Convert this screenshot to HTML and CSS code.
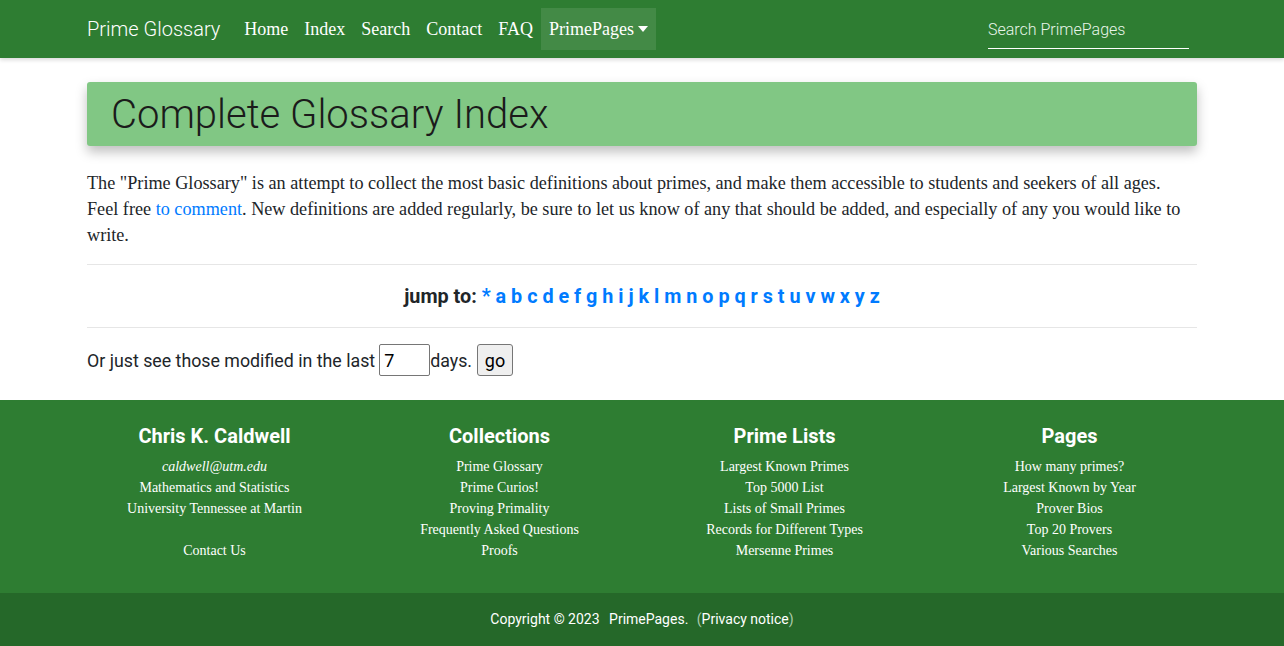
FILE: index.html
```html
<!DOCTYPE html>
<html lang="en">
<head>
  <meta charset="UTF-8">
  <title>Complete Glossary Index</title>
  <link rel="stylesheet" href="styles.css">
</head>
<body>
  <!-- Top navigation -->
  <nav class="navbar">
    <div class="container nav-inner">
      <a class="brand" href="#">Prime Glossary</a>
      <ul class="nav-links">
        <li><a href="#">Home</a></li>
        <li><a href="#">Index</a></li>
        <li><a href="#">Search</a></li>
        <li><a href="#">Contact</a></li>
        <li><a href="#">FAQ</a></li>
        <li class="dropdown"><a href="#">PrimePages<span class="caret"></span></a></li>
      </ul>
      <input class="nav-search" type="text" placeholder="Search PrimePages">
    </div>
  </nav>

  <main class="container main">
    <div class="title-box">
      <h1>Complete Glossary Index</h1>
    </div>

    <p class="intro">The "Prime Glossary" is an attempt to collect the most basic definitions about primes, and make them accessible to students and seekers of all ages. Feel free <a href="#">to comment</a>. New definitions are added regularly, be sure to let us know of any that should be added, and especially of any you would like to write.</p>

    <hr>
    <div class="jump">jump to: <a href="#">*</a> <a href="#">a</a> <a href="#">b</a> <a href="#">c</a> <a href="#">d</a> <a href="#">e</a> <a href="#">f</a> <a href="#">g</a> <a href="#">h</a> <a href="#">i</a> <a href="#">j</a> <a href="#">k</a> <a href="#">l</a> <a href="#">m</a> <a href="#">n</a> <a href="#">o</a> <a href="#">p</a> <a href="#">q</a> <a href="#">r</a> <a href="#">s</a> <a href="#">t</a> <a href="#">u</a> <a href="#">v</a> <a href="#">w</a> <a href="#">x</a> <a href="#">y</a> <a href="#">z</a></div>
    <hr>

    <form class="modified">
      <span>Or just see those modified in the last</span>
      <input type="text" value="7" class="days">
      <span>days.</span>
      <button type="button" class="go">go</button>
    </form>
  </main>

  <!-- Footer -->
  <footer class="footer">
    <div class="container footer-cols">
      <div class="fcol">
        <h4>Chris K. Caldwell</h4>
        <i>caldwell@utm.edu</i><br>
        Mathematics and Statistics<br>
        University Tennessee at Martin<br>
        <br>
        Contact Us
      </div>
      <div class="fcol">
        <h4>Collections</h4>
        Prime Glossary<br>
        Prime Curios!<br>
        Proving Primality<br>
        Frequently Asked Questions<br>
        Proofs
      </div>
      <div class="fcol">
        <h4>Prime Lists</h4>
        Largest Known Primes<br>
        Top 5000 List<br>
        Lists of Small Primes<br>
        Records for Different Types<br>
        Mersenne Primes
      </div>
      <div class="fcol">
        <h4>Pages</h4>
        How many primes?<br>
        Largest Known by Year<br>
        Prover Bios<br>
        Top 20 Provers<br>
        Various Searches
      </div>
    </div>
  </footer>
  <div class="copyright">
    Copyright © 2023 <span class="site">PrimePages.</span> <span class="paren">(</span>Privacy notice<span class="paren">)</span>
  </div>
</body>
</html>
```

FILE: styles.css
```css
body {
  margin: 0;
  font-family: Roboto, "Liberation Sans", sans-serif;
  color: #212529;
  background: #fff;
}
.container {
  width: 1110px;
  margin: 0 auto;
}
a {
  color: #007bff;
  text-decoration: none;
}

/* navbar */
.navbar {
  background: #2e7d32;
  height: 58px;
  box-shadow: 0 2px 4px rgba(0,0,0,0.15);
}
.nav-inner {
  display: flex;
  align-items: center;
  height: 58px;
}
.brand {
  color: #fff;
  font-family: Roboto, sans-serif;
  font-weight: 300;
  font-size: 20px;
  margin-right: 16px;
}
.nav-links {
  display: flex;
  list-style: none;
  margin: 0;
  padding: 0;
}
.nav-links a {
  display: block;
  color: #fff;
  font-family: "Liberation Serif", serif;
  font-size: 18px;
  padding: 10px 8px 9px;
  line-height: 23px;
}
.dropdown a {
  background: rgba(255,255,255,0.1);
}
.caret {
  display: inline-block;
  margin-left: 4px;
  vertical-align: 3px;
  border-top: 6px solid #fff;
  border-left: 5px solid transparent;
  border-right: 5px solid transparent;
}
.nav-search {
  margin-left: auto;
  margin-right: 8px;
  width: 201px;
  background: transparent;
  border: none;
  border-bottom: 1px solid #fff;
  color: #fff;
  font-family: Roboto, sans-serif;
  font-weight: 300;
  font-size: 16px;
  padding: 9px 0 9px;
  margin-top: 2px;
  outline: none;
}
.nav-search::placeholder {
  color: #e8f5e9;
}

/* main */
.main {
  padding-top: 24px;
}
.title-box {
  background: #81c784;
  border-radius: 3px;
  height: 64px;
  padding: 0 24px;
  box-shadow: 0 6px 12px rgba(0,0,0,0.25);
  display: flex;
  align-items: center;
}
h1 {
  margin: 0;
  font-weight: 300;
  font-size: 40px;
  color: #1b1b1b;
}
.intro {
  font-family: "Liberation Serif", serif;
  font-size: 18.2px;
  line-height: 26px;
  margin: 24px 0 16px;
  padding-right: 8px;
}
hr {
  border: none;
  border-top: 1px solid #e6e6e6;
  margin: 0;
}
.jump {
  text-align: center;
  font-weight: 700;
  font-size: 19.8px;
  padding: 18px 0 17px;
  line-height: 27px;
}
.jump a {
  color: #007bff;
}
.modified {
  font-size: 17.8px;
  padding: 16px 0 24px;
  margin: 0;
  display: flex;
  align-items: center;
}
.days {
  box-sizing: border-box;
  width: 51px;
  height: 32px;
  font-size: 18px;
  font-family: Roboto, sans-serif;
  border: 1px solid #767676;
  border-radius: 2px;
  padding: 1px 4px;
  margin: 0 0 0 4px;
}
.go {
  box-sizing: border-box;
  font-family: Roboto, sans-serif;
  font-size: 18px;
  height: 32px;
  width: 36px;
  padding: 0;
  margin-left: 5px;
  background: #efefef;
  border: 1px solid #767676;
  border-radius: 3px;
  color: #000;
}

/* footer */
.footer {
  background: #2e7d32;
  color: #fff;
  padding: 24px 0 32px;
}
.footer-cols {
  display: grid;
  grid-template-columns: repeat(4, 1fr);
  width: 1140px;
}
.fcol {
  text-align: center;
  font-family: "Liberation Serif", serif;
  font-size: 14px;
  line-height: 21px;
}
.fcol h4 {
  font-family: Roboto, sans-serif;
  font-weight: 700;
  font-size: 20px;
  margin: 0 0 8px;
  line-height: 24px;
}
.copyright {
  background: #256829;
  color: #fff;
  text-align: center;
  font-size: 14px;
  height: 53px;
  line-height: 53px;
}
.site {
  margin-left: 6px;
  margin-right: 5px;
}
.paren {
  color: #aacbab;
}
```
